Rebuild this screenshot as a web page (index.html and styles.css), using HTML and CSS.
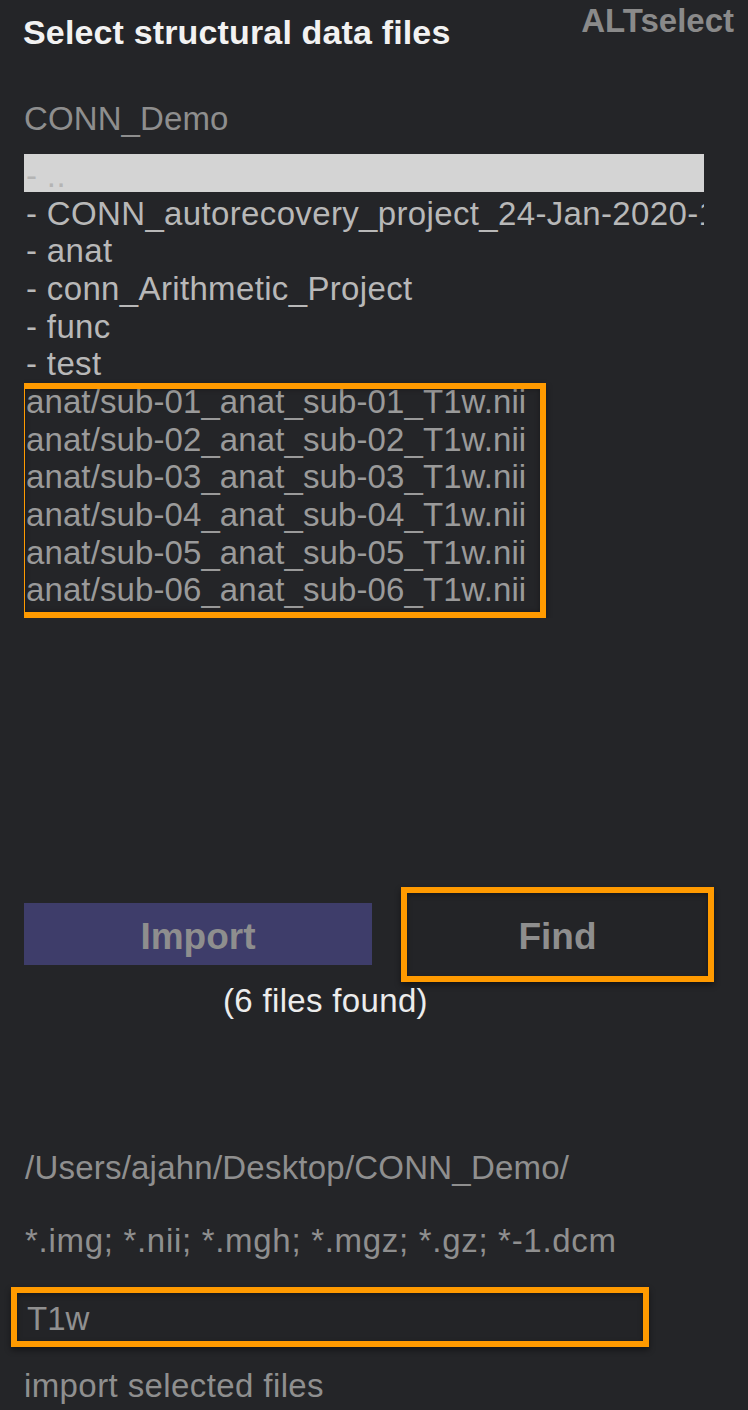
FILE: index.html
```html
<!DOCTYPE html>
<html lang="en">
<head>
<meta charset="utf-8">
<title>Select structural data files</title>
<link rel="stylesheet" href="styles.css">
</head>
<body>
<main class="panel">
  <header class="header">
    <h1 class="title">Select structural data files</h1>
    <div class="alt">ALTselect</div>
  </header>

  <div class="folder">CONN_Demo</div>

  <div class="list">
    <div class="row row-selected">- ..</div>
    <div class="row">- CONN_autorecovery_project_24-Jan-2020-12_00_00</div>
    <div class="row">- anat</div>
    <div class="row">- conn_Arithmetic_Project</div>
    <div class="row">- func</div>
    <div class="row">- test</div>
    <div class="files">
      <div class="row file">anat/sub-01_anat_sub-01_T1w.nii</div>
      <div class="row file">anat/sub-02_anat_sub-02_T1w.nii</div>
      <div class="row file">anat/sub-03_anat_sub-03_T1w.nii</div>
      <div class="row file">anat/sub-04_anat_sub-04_T1w.nii</div>
      <div class="row file">anat/sub-05_anat_sub-05_T1w.nii</div>
      <div class="row file">anat/sub-06_anat_sub-06_T1w.nii</div>
    </div>
  </div>

  <div class="actions">
    <button class="btn btn-import" type="button">Import</button>
    <button class="btn btn-find" type="button">Find</button>
  </div>
  <div class="found">(6 files found)</div>

  <div class="path">/Users/ajahn/Desktop/CONN_Demo/</div>
  <div class="filter">*.img; *.nii; *.mgh; *.mgz; *.gz; *-1.dcm</div>
  <div class="search">T1w</div>
  <div class="import-label">import selected files</div>
</main>
</body>
</html>
```
FILE: styles.css
```css
html, body {
  margin: 0;
  padding: 0;
  height: 100%;
  overflow: hidden;
  background: #242528;
}

body {
  font-family: "Liberation Sans", Arial, Helvetica, sans-serif;
  font-size: 33px;
  color: #8f8f8f;
}

.panel {
  padding: 0 14px 0 24px;
}

.header {
  display: flex;
  justify-content: space-between;
  align-items: flex-start;
  height: 51px;
}

.title {
  margin: 12px 0 0 -1px;
  font-size: 34px;
  line-height: 40px;
  font-weight: 700;
  letter-spacing: 0.15px;
  color: #f2f2f2;
}

.alt {
  margin-top: 1px;
  font-size: 33px;
  line-height: 40px;
  font-weight: 700;
  color: #8a8a8a;
}

.folder {
  margin-top: 48px;
  line-height: 40px;
  letter-spacing: 0.1px;
  color: #8e8e8e;
}

.list {
  margin-top: 15px;
  width: 680px;
  overflow: hidden;
}

.row {
  height: 37.67px;
  line-height: 44px;
  padding-left: 2px;
  white-space: nowrap;
  letter-spacing: 0.35px;
  color: #b8b8b8;
}

.row-selected {
  background: #d4d4d4;
  color: #b4b4b4;
}

.files {
  position: relative;
  padding-bottom: 12px;
}

.files::after {
  content: "";
  position: absolute;
  top: 3px;
  left: -5px;
  width: 515px;
  bottom: 0;
  border: 6px solid #ff9a00;
  box-shadow: 0 3px 6px rgba(0, 0, 0, 0.45), inset 0 0 5px rgba(0, 0, 0, 0.35);
  pointer-events: none;
}

.file {
  letter-spacing: 0.1px;
  color: #9a9a9a;
}

.actions {
  display: flex;
  align-items: center;
  gap: 29px;
  margin-top: 269px;
  height: 95px;
}

.btn {
  font-family: "Liberation Sans", Arial, Helvetica, sans-serif;
  font-size: 37px;
  font-weight: 700;
  color: #8e8e8e;
  margin: 0;
  cursor: pointer;
}

.btn-import {
  width: 348px;
  height: 62px;
  padding: 5px 0 0;
  border: none;
  background: #3e3d6a;
}

.btn-find {
  width: 313px;
  height: 95px;
  padding: 6px 0 0;
  border: 6px solid #ff9a00;
  background: #232427;
  box-shadow: 0 3px 6px rgba(0, 0, 0, 0.45), inset 0 2px 5px rgba(0, 0, 0, 0.35);
}

.found {
  margin: -1px 0 0 199px;
  line-height: 40px;
  letter-spacing: 0.33px;
  color: #ececec;
}

.path {
  margin-top: 127px;
  line-height: 40px;
  padding-left: 1px;
  letter-spacing: 0.22px;
}

.filter {
  margin-top: 33px;
  line-height: 40px;
  padding-left: 1px;
  letter-spacing: 0.7px;
}

.search {
  margin: 26px 0 0 -13px;
  width: 616px;
  height: 48px;
  line-height: 52px;
  padding-left: 10px;
  border: 6px solid #ff9a00;
  background: #232427;
  box-shadow: 0 3px 6px rgba(0, 0, 0, 0.45), inset 0 2px 5px rgba(0, 0, 0, 0.35);
  color: #909090;
}

.import-label {
  margin-top: 19px;
  line-height: 40px;
  letter-spacing: 0.4px;
}
```
